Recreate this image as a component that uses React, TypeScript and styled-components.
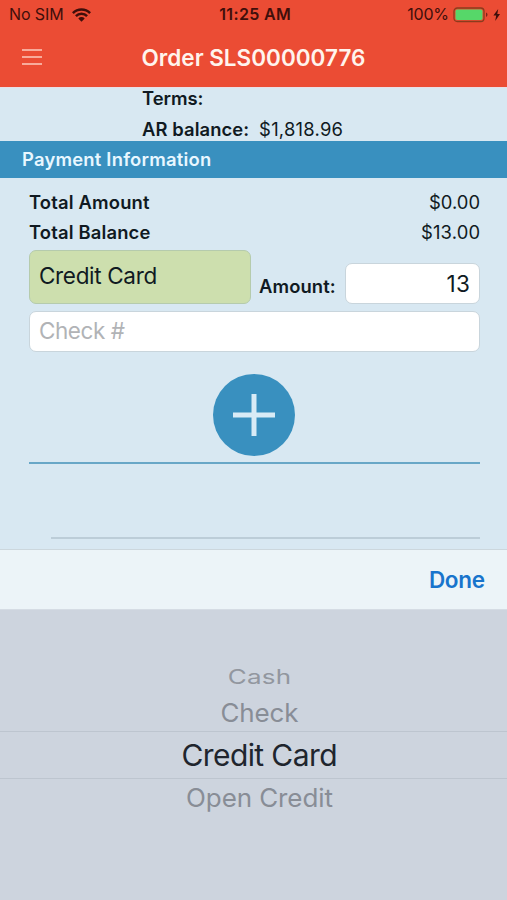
import React from "react";
import styled, { createGlobalStyle } from "styled-components";

const GlobalStyle = createGlobalStyle`
  * { box-sizing: border-box; }
  body { margin: 0; background: #cdd4de; font-family: Inter, "Liberation Sans", sans-serif; }
`;

const Screen = styled.main`
  width: 507px;
  height: 900px;
  display: flex;
  flex-direction: column;
  overflow: hidden;
  background: #d8e8f2;
  color: #101a22;
`;

const Label = styled.span<{ $size: number; $weight?: number; $track?: number; $color?: string }>`
  display: inline-block;
  white-space: pre;
  line-height: 1.2;
  font-size: ${(p) => p.$size}px;
  font-weight: ${(p) => p.$weight ?? 400};
  letter-spacing: ${(p) => p.$track ?? 0}px;
  margin-right: ${(p) => -(p.$track ?? 0)}px;
  color: ${(p) => p.$color ?? "inherit"};
`;

const Header = styled.header`
  flex: none;
  height: 87px;
  background: #eb4c34;
`;

const StatusBar = styled.div`
  height: 30px;
  padding: 0 6px 0 9px;
  display: grid;
  grid-template-columns: 1fr auto 1fr;
  align-items: center;
  color: #3f0f0b;
`;

const StatusGroup = styled.div<{ $end?: boolean }>`
  display: flex;
  align-items: center;
  gap: ${(p) => (p.$end ? 4 : 8)}px;
  justify-content: ${(p) => (p.$end ? "flex-end" : "flex-start")};
`;

const NavBar = styled.div`
  height: 54px;
  padding: 0 22px;
  display: grid;
  grid-template-columns: 20px 1fr 20px;
  align-items: center;
  justify-items: center;
`;

const MenuButton = styled.button`
  width: 20px;
  height: 16px;
  padding: 0;
  border: 0;
  background: none;
  display: flex;
  flex-direction: column;
  justify-content: space-between;
`;

const MenuLine = styled.span`
  height: 2px;
  width: 20px;
  background: #f8ab9b;
`;

const CustomerInfo = styled.section`
  flex: none;
  height: 54px;
  padding-left: 142px;
  border-top: 1px solid #e9dfe6;
`;

const InfoRow = styled.div`
  height: 31px;
  margin-top: -5px;
  display: flex;
  align-items: center;
  gap: 10px;
  & + & { margin-top: 0; }
`;

const SectionTitle = styled.div`
  flex: none;
  height: 37px;
  padding-left: 22px;
  display: flex;
  align-items: center;
  background: #3990bf;
`;

const Payment = styled.section`
  flex: none;
  height: 371px;
  padding: 9px 27px 0 29px;
`;

const TotalRow = styled.div`
  height: 30px;
  display: flex;
  align-items: center;
  justify-content: space-between;
`;

const MethodRow = styled.div`
  height: 54px;
  margin-top: 3px;
  display: grid;
  grid-template-columns: 222px 1fr 135px;
  align-items: end;
`;

const Field = styled.div<{ $tall?: boolean; $right?: boolean }>`
  height: ${(p) => (p.$tall ? 54 : 41)}px;
  padding: 0 9px ${(p) => (p.$right ? 0 : 3)}px;
  display: flex;
  align-items: center;
  justify-content: ${(p) => (p.$right ? "flex-end" : "flex-start")};
  background: ${(p) => (p.$tall ? "#cddfae" : "#ffffff")};
  border: 1px solid ${(p) => (p.$tall ? "#b5cbad" : "#c9d5dc")};
  border-radius: 7px;
`;

const AmountLabel = styled.div`
  height: 35px;
  padding-left: 8px;
  display: flex;
  align-items: center;
`;

const CheckRow = styled.div`
  margin-top: 7px;
`;

const AddRow = styled.div`
  height: 112px;
  padding-top: 22px;
  display: flex;
  justify-content: center;
  border-bottom: 2px solid #68a7c7;
`;

const AddButton = styled.button`
  width: 82px;
  height: 82px;
  margin-right: 2px;
  padding: 0;
  border: 0;
  border-radius: 50%;
  display: grid;
  place-items: center;
  background: #3990bf;
`;

const Divider = styled.div`
  height: 2px;
  margin: 73px 0 0 22px;
  background: #bccdd8;
`;

const Toolbar = styled.div`
  flex: none;
  height: 60px;
  padding-right: 22px;
  display: flex;
  align-items: center;
  justify-content: flex-end;
  background: #ecf4f8;
  border-top: 1px solid #ccd7dd;
`;

const Picker = styled.div`
  flex: 1;
  padding-top: 53px;
  background: #cdd4de;
  border-top: 1px solid #d5dce4;
`;

const Option = styled.div<{ $height: number; $squash?: number; $selected?: boolean; $lift?: number; $drop?: number }>`
  height: ${(p) => p.$height}px;
  display: flex;
  align-items: center;
  justify-content: center;
  padding: ${(p) => p.$drop ?? 0}px 0 ${(p) => p.$lift ?? 0}px 12px;
  border: 0 solid #bdc5cf;
  border-width: ${(p) => (p.$selected ? "1px 0" : "0")};
  & > span { transform: scaleY(${(p) => p.$squash ?? 1}); }
`;

const WifiIcon = () => (
  <svg width="19" height="14" viewBox="0 0 19 14">
    <g fill="none" stroke="#3f0f0b" strokeWidth="2.5">
      <path d="M.9 5.1a12.2 12.2 0 0 1 17.2 0" />
      <path d="M3.9 8.2a7.9 7.9 0 0 1 11.2 0" />
    </g>
    <path d="M6.3 10.4a4.5 4.5 0 0 1 6.4 0L9.5 13.7z" fill="#3f0f0b" />
  </svg>
);

const BatteryIcon = () => (
  <svg width="36" height="16" viewBox="0 0 36 16">
    <rect x="1" y="1" width="30" height="13.5" rx="3.3" fill="#eb4c34" stroke="#8a3c1d" strokeWidth="1.3" />
    <rect x="2.5" y="2.5" width="27" height="10.5" rx="1.7" fill="#56d769" />
    <path d="M33 5.6q1.5.6 1.5 2.2T33 10z" fill="#79271b" />
  </svg>
);

const BoltIcon = () => (
  <svg width="8" height="12" viewBox="0 0 8 12">
    <path d="M5.2 0 .4 6.6h2.8L2.2 12l4.8-7H4.3z" fill="#3f0f0b" />
  </svg>
);

export default function App() {
  return (
    <>
      <GlobalStyle />
      <Screen>
        <Header>
          <StatusBar>
            <StatusGroup>
              <Label $size={16} $track={-0.1}>No SIM</Label>
              <WifiIcon />
            </StatusGroup>
            <Label $size={16} $weight={600} $track={0.35}>11:25 AM</Label>
            <StatusGroup $end>
              <Label $size={16} $track={-0.25}>100%</Label>
              <BatteryIcon />
              <BoltIcon />
            </StatusGroup>
          </StatusBar>
          <NavBar>
            <MenuButton aria-label="Menu">
              <MenuLine />
              <MenuLine />
              <MenuLine />
            </MenuButton>
            <Label $size={22.5} $weight={600} $color="#fff4ed">Order SLS00000776</Label>
          </NavBar>
        </Header>
        <CustomerInfo>
          <InfoRow>
            <Label $size={18.4} $weight={600} $track={-0.05}>Terms:</Label>
          </InfoRow>
          <InfoRow>
            <Label $size={18.4} $weight={600} $track={0.08}>AR balance:</Label>
            <Label $size={18.4} $track={0.23}>$1,818.96</Label>
          </InfoRow>
        </CustomerInfo>
        <SectionTitle>
          <Label $size={18.4} $weight={600} $track={0.22} $color="#e8f7ff">Payment Information</Label>
        </SectionTitle>
        <Payment>
          <TotalRow>
            <Label $size={18.4} $weight={600} $track={0.17}>Total Amount</Label>
            <Label $size={18.4}>$0.00</Label>
          </TotalRow>
          <TotalRow>
            <Label $size={18.4} $weight={600} $track={0.16}>Total Balance</Label>
            <Label $size={18.4} $track={0.15}>$13.00</Label>
          </TotalRow>
          <MethodRow>
            <Field $tall>
              <Label $size={22.5} $track={-0.33}>Credit Card</Label>
            </Field>
            <AmountLabel>
              <Label $size={18.4} $weight={600} $track={0.1}>Amount:</Label>
            </AmountLabel>
            <Field $right>
              <Label $size={22.5} $track={0.4}>13</Label>
            </Field>
          </MethodRow>
          <CheckRow>
            <Field>
              <Label $size={22.5} $track={-0.45} $color="#b1b3b6">Check #</Label>
            </Field>
          </CheckRow>
          <AddRow>
            <AddButton aria-label="Add payment">
              <svg width="42" height="42" viewBox="0 0 42 42">
                <path d="M21 0v42M0 21h42" stroke="#d8ebf6" strokeWidth="5" />
              </svg>
            </AddButton>
          </AddRow>
          <Divider />
        </Payment>
        <Toolbar>
          <Label $size={22.5} $weight={600} $track={-0.3} $color="#1874cc">Done</Label>
        </Toolbar>
        <Picker>
          <Option $height={27} $squash={0.77}>
            <Label $size={26} $track={0.2} $color="#92979f">Cash</Label>
          </Option>
          <Option $height={41} $squash={0.97} $drop={4}>
            <Label $size={26} $track={-0.1} $color="#888d96">Check</Label>
          </Option>
          <Option $height={48} $selected>
            <Label $size={30} $track={-0.6} $color="#20252d">Credit Card</Label>
          </Option>
          <Option $height={39} $squash={0.97} $lift={2}>
            <Label $size={26} $track={-0.1} $color="#888d96">Open Credit</Label>
          </Option>
        </Picker>
      </Screen>
    </>
  );
}
